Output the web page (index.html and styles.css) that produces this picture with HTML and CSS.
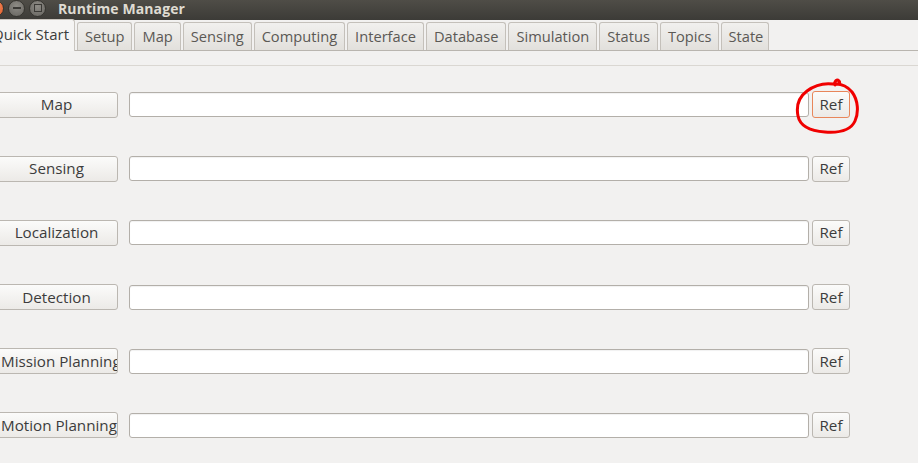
FILE: index.html
```html
<!DOCTYPE html>
<html>
<head>
<meta charset="utf-8">
<title>Runtime Manager</title>
<link rel="stylesheet" href="styles.css">
</head>
<body>
<div class="window">
  <header class="titlebar">
    <div class="wbtns">
      <span class="wbtn close"></span>
      <span class="wbtn min"><span class="dash"></span></span>
      <span class="wbtn max"><span class="sq"></span></span>
    </div>
    <div class="title">Runtime Manager</div>
  </header>
  <nav class="tabbar">
    <div class="tab active">Quick Start</div>
    <div class="tab">Setup</div>
    <div class="tab">Map</div>
    <div class="tab">Sensing</div>
    <div class="tab">Computing</div>
    <div class="tab">Interface</div>
    <div class="tab">Database</div>
    <div class="tab">Simulation</div>
    <div class="tab">Status</div>
    <div class="tab">Topics</div>
    <div class="tab">State</div>
  </nav>
  <div class="pane-top"></div>
  <main class="rows">
    <div class="row">
      <button class="btn name">Map</button>
      <input class="field" type="text">
      <span class="ref-wrap">
        <button class="btn ref focus">Ref</button>
        <svg class="scribble" width="70" height="62" viewBox="0 0 70 62">
          <path d="M40 9 C 39 5, 42 3, 44 5 C 46 7, 43 9, 38 8 C 30 7, 20 9, 12 15 C 4 21, 1 30, 3 40 C 5 50, 16 55, 30 56 C 44 57, 56 54, 60 45 C 64 36, 63 24, 57 16 C 52 10, 46 8, 41 8" fill="none" stroke="#f00000" stroke-width="3" stroke-linecap="round" stroke-linejoin="round"/>
        </svg>
      </span>
    </div>
    <div class="row">
      <button class="btn name">Sensing</button>
      <input class="field" type="text">
      <button class="btn ref">Ref</button>
    </div>
    <div class="row">
      <button class="btn name">Localization</button>
      <input class="field" type="text">
      <button class="btn ref">Ref</button>
    </div>
    <div class="row">
      <button class="btn name">Detection</button>
      <input class="field" type="text">
      <button class="btn ref">Ref</button>
    </div>
    <div class="row">
      <button class="btn name">Mission Planning</button>
      <input class="field" type="text">
      <button class="btn ref">Ref</button>
    </div>
    <div class="row">
      <button class="btn name">Motion Planning</button>
      <input class="field" type="text">
      <button class="btn ref">Ref</button>
    </div>
  </main>
</div>
</body>
</html>
```

FILE: styles.css
```css
* { box-sizing: border-box; }
html, body {
  margin: 0;
  padding: 0;
  width: 918px;
  height: 463px;
  overflow: hidden;
  background: #f2f1f0;
  font-family: "Open Sans", "Noto Sans", "DejaVu Sans", sans-serif;
}
.window {
  width: 918px;
  height: 463px;
  overflow: hidden;
  background: #f2f1f0;
}
.titlebar {
  height: 20px;
  display: flex;
  align-items: center;
  background: linear-gradient(#4f4d47, #3c3b37);
  overflow: hidden;
}
.wbtns {
  display: flex;
  align-items: center;
  gap: 4px;
  margin-left: -13px;
  margin-top: -4px;
}
.wbtn {
  width: 17px;
  height: 17px;
  border-radius: 50%;
  display: flex;
  align-items: center;
  justify-content: center;
  border: 1px solid #35342f;
}
.wbtn.close {
  background: radial-gradient(circle at 50% 35%, #f68c5f, #df5a26);
}
.wbtn.min, .wbtn.max {
  background: radial-gradient(circle at 50% 35%, #8e8c86, #65635e);
}
.dash {
  width: 8px;
  height: 2px;
  background: #3b3a36;
}
.sq {
  width: 8px;
  height: 8px;
  border: 1.5px solid #3b3a36;
}
.title {
  margin-left: 12px;
  color: #dfdbd2;
  font-weight: 700;
  font-size: 14px;
  line-height: 18px;
  margin-top: -3px;
  letter-spacing: 0.1px;
}
.tabbar {
  display: flex;
  align-items: flex-end;
  gap: 2px;
  height: 31px;
  border-bottom: 1px solid #b9b5af;
  margin-left: -16px;
  background: #f2f1f0;
}
.tab {
  height: 28px;
  padding: 0 7px 1px;
  display: flex;
  align-items: center;
  font-size: 14.67px;
  color: #5b5955;
  background: linear-gradient(#f1f0ee, #e2e0dc);
  border: 1px solid #c4c0ba;
  border-bottom: none;
  border-radius: 3px 3px 0 0;
  white-space: nowrap;
}
.tab:last-child {
  padding-right: 5px;
  padding-left: 6px;
}
.tab.active {
  height: 32px;
  margin-bottom: -1px;
  background: #f5f4f3;
  color: #3c3c3c;
  border-color: #c9c5bf;
  margin-right: 0;
  padding: 0 5px 4px 7px;
  font-size: 15px;
}
.pane-top {
  height: 15px;
  border-bottom: 1px solid #dad7d2;
}
.rows {
  padding-top: 26px;
  display: flex;
  flex-direction: column;
  gap: 39.2px;
}
.row {
  display: flex;
  align-items: center;
  height: 25px;
}
.btn {
  font-family: "Open Sans", "Noto Sans", "DejaVu Sans", sans-serif;
  font-size: 15.2px;
  color: #3c3c3c;
  background: linear-gradient(#fbfbfa, #eceae7);
  border: 1px solid #bbb7b1;
  border-radius: 3px;
  height: 26px;
  padding: 0 0 1px;
  line-height: 22px;
  white-space: nowrap;
  overflow: hidden;
  text-align: center;
}
.btn.name {
  width: 124px;
  margin-left: -6px;
  padding: 0 5px 1px 6px;
}
.field {
  width: 680px;
  height: 25px;
  margin-left: 11px;
  background: #ffffff;
  border: 1px solid #b3afa9;
  border-radius: 3px;
  box-shadow: inset 0 1px 1px rgba(0,0,0,0.06);
  outline: none;
}
.btn.ref {
  width: 38px;
  margin-left: 3px;
}
.ref-wrap {
  position: relative;
  display: flex;
  margin-left: 3px;
}
.ref-wrap .btn.ref {
  margin-left: 0;
}
.btn.ref.focus {
  border-color: #e8865a;
  height: 27px;
}
.scribble {
  position: absolute;
  left: -17px;
  top: -15px;
  pointer-events: none;
}
```
